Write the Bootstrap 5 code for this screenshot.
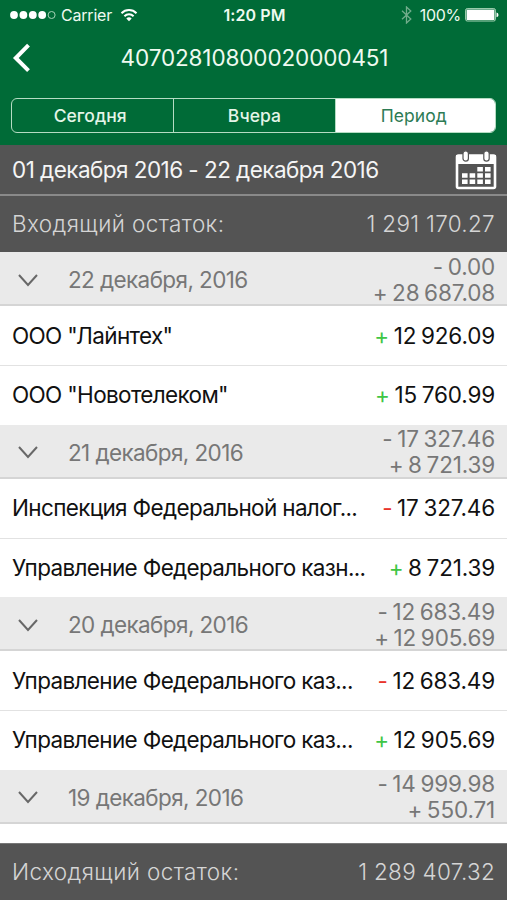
<!DOCTYPE html>
<html lang="ru">
<head>
<meta charset="utf-8">
<meta name="viewport" content="width=device-width, initial-scale=1">
<title>Выписка по счёту</title>
<link rel="stylesheet" href="https://cdn.jsdelivr.net/npm/bootstrap@5.3.0/dist/css/bootstrap.min.css">
<style>
body{font-family:Inter,"Liberation Sans",sans-serif;font-size:22.5px;line-height:26px;color:#111;width:507px;height:900px;overflow:hidden;background:#fff}
svg{display:block;flex:none}
.top-area{background:#006b37;color:#effaf0;height:145px}
.status-bar{height:30px;font-size:16px;line-height:30px;padding:0 8px 0 10px}
.status-bar>div{flex:1 1 0}
.carrier{letter-spacing:-.2px;margin-left:5px}
.clock{font-weight:600;letter-spacing:.1px}
.pct{margin-left:8px;letter-spacing:-.3px}
.title-bar{height:56px;padding:0 12px}
.account{letter-spacing:-.12px;padding-right:18px}
.periods{margin:12px 11px 0;height:35px;border:1.5px solid #b5dcc3;border-radius:6px;overflow:hidden;display:flex}
.periods .btn{flex:none;width:33.4%;padding:0 5px 0 0;border:0;border-radius:0;font-size:17.5px;font-weight:500;line-height:33px;color:#e4f5e8;letter-spacing:.05px}
.periods .btn+.btn{border-left:1.5px solid #b5dcc3;padding-right:0}
.periods .btn.active{background:#fff;color:#2d7b55;font-weight:400;line-height:32px;padding-right:4px}
.range-row{height:51px;background:#545454;color:#f5f5f5;border-bottom:2px solid #8a8a8a;padding:0 10px 0 12px}
.range-text{letter-spacing:-.54px;padding-top:1px}
.balance{background:#545454;color:#d5d5d5;padding:0 12px;font-weight:300}
.balance-in{height:56px}
.balance-out{height:57px;border-top:1px solid #777}
.balance-label{letter-spacing:.4px}
.sum{letter-spacing:-.15px;word-spacing:-1.5px}
.balance .sum{letter-spacing:.3px;word-spacing:0}
.day-head{height:54px;background:#eaeaea;color:#777;border-bottom:2px solid #d5d5d5;padding:3px 12px 0 18px}
.day-name{margin-left:30px;letter-spacing:-.6px;padding-top:1px}
.entry{height:59.25px;padding:0 12px}
.entry+.entry{border-top:1.5px solid #e2e2e2}
.payee{letter-spacing:-.66px}
.plus{color:#3fc646}
.minus{color:#e9342c}
.list-area{height:591px;overflow:hidden}
</style>
<script src="https://cdn.jsdelivr.net/npm/bootstrap@5.3.0/dist/js/bootstrap.bundle.min.js"></script>
</head>
<body>
<header class="top-area">
  <div class="status-bar d-flex align-items-center">
    <div class="d-flex align-items-center">
      <svg width="46" height="12" viewBox="0 0 46 12"><g fill="#fff"><circle cx="4" cy="6" r="3.9"/><circle cx="13.4" cy="6" r="3.9"/><circle cx="22.8" cy="6" r="3.9"/><circle cx="32.2" cy="6" r="3.9"/></g><circle cx="41.6" cy="6" r="3.5" fill="none" stroke="#a5d3b6"/></svg>
      <span class="carrier">Carrier</span>
      <svg class="ms-2" width="18" height="14" viewBox="0 0 18 14" fill="none" stroke="#fff" stroke-width="2"><path d="M1.5 5.2A10.6 10.6 0 0 1 16.5 5.2M4.4 8.2A6.6 6.6 0 0 1 13.6 8.2"/><path d="M9 13.2 6.3 10.5A3.8 3.8 0 0 1 11.7 10.5Z" fill="#fff" stroke="none"/></svg>
    </div>
    <span class="clock">1:20 PM</span>
    <div class="d-flex align-items-center justify-content-end">
      <svg width="11" height="18" viewBox="0 0 11 18" fill="none" stroke="#72ad8c" stroke-width="1.3"><path d="M1 4.7 9.8 13 5.5 17V1L9.8 5 1 13.3"/></svg>
      <span class="pct">100%</span>
      <svg class="ms-1" width="34" height="14" viewBox="0 0 34 14"><rect x=".6" y=".6" width="29.8" height="12.4" rx="1.6" fill="none" stroke="#a8d5b7"/><rect x="1.6" y="1.6" width="27.8" height="10.4" fill="#fff"/><path d="M31.5 4.5q2 .4 2 2.4t-2 2.4z" fill="#fff"/></svg>
    </div>
  </div>
  <div class="title-bar d-flex align-items-center">
    <svg width="20" height="30" viewBox="0 0 20 30" fill="none" stroke="#fff" stroke-width="4"><path d="M16.5 2.2 3.8 15 16.5 27.6"/></svg>
    <div class="flex-grow-1 text-center account">40702810800020000451</div>
  </div>
  <div class="periods" role="group">
    <button type="button" class="btn">Сегодня</button>
    <button type="button" class="btn">Вчера</button>
    <button type="button" class="btn active">Период</button>
  </div>
</header>
<div class="range-row d-flex align-items-center justify-content-between">
  <span class="range-text">01 декабря 2016 - 22 декабря 2016</span>
  <svg width="42" height="40" viewBox="0 0 42 40"><rect x="2" y="5.5" width="38" height="32.5" rx="1.5" fill="none" stroke="#fff" stroke-width="2.6"/><path fill="#fff" d="M1 5h40v9H1z"/><g fill="#fff" stroke="#545454" stroke-width="1.2"><rect x="8" y=".8" width="5.4" height="10.4" rx="2.7"/><rect x="28.8" y=".8" width="5.4" height="10.4" rx="2.7"/></g><path fill="#fff" d="M22.3 17h5.6v4.6h-5.6zM30 17h5.6v4.6H30zM7 23.2h5.6v4.6H7zM14.6 23.2h5.6v4.6h-5.6zM22.3 23.2h5.6v4.6h-5.6zM30 23.2h5.6v4.6H30zM7 29.4h5.6V34H7zM14.6 29.4h5.6V34h-5.6zM22.3 29.4h5.6V34h-5.6zM30 29.4h5.6V34H30z"/></svg>
</div>
<div class="balance balance-in d-flex align-items-center justify-content-between"><span class="balance-label">Входящий остаток:</span><span class="sum">1 291 170.27</span></div>
<main class="list-area">
  <div class="day-head d-flex align-items-center">
    <svg width="20" height="14" viewBox="0 0 20 14" fill="none" stroke="#686868" stroke-width="2"><path d="M1 2 10 12 19 2"/></svg>
    <span class="day-name">22 декабря, 2016</span>
    <div class="sum text-end ms-auto"><div>- 0.00</div><div>+ 28 687.08</div></div>
  </div>
  <div class="entry d-flex align-items-center justify-content-between"><span class="payee">ООО "Лайнтех"</span><span class="sum"><span class="plus">+</span> 12 926.09</span></div>
  <div class="entry d-flex align-items-center justify-content-between"><span class="payee">ООО "Новотелеком"</span><span class="sum"><span class="plus">+</span> 15 760.99</span></div>
  <div class="day-head d-flex align-items-center">
    <svg width="20" height="14" viewBox="0 0 20 14" fill="none" stroke="#686868" stroke-width="2"><path d="M1 2 10 12 19 2"/></svg>
    <span class="day-name">21 декабря, 2016</span>
    <div class="sum text-end ms-auto"><div>- 17 327.46</div><div>+ 8 721.39</div></div>
  </div>
  <div class="entry d-flex align-items-center justify-content-between"><span class="payee">Инспекция Федеральной налог...</span><span class="sum"><span class="minus">-</span> 17 327.46</span></div>
  <div class="entry d-flex align-items-center justify-content-between"><span class="payee">Управление Федерального казн...</span><span class="sum"><span class="plus">+</span> 8 721.39</span></div>
  <div class="day-head d-flex align-items-center">
    <svg width="20" height="14" viewBox="0 0 20 14" fill="none" stroke="#686868" stroke-width="2"><path d="M1 2 10 12 19 2"/></svg>
    <span class="day-name">20 декабря, 2016</span>
    <div class="sum text-end ms-auto"><div>- 12 683.49</div><div>+ 12 905.69</div></div>
  </div>
  <div class="entry d-flex align-items-center justify-content-between"><span class="payee">Управление Федерального каз...</span><span class="sum"><span class="minus">-</span> 12 683.49</span></div>
  <div class="entry d-flex align-items-center justify-content-between"><span class="payee">Управление Федерального каз...</span><span class="sum"><span class="plus">+</span> 12 905.69</span></div>
  <div class="day-head d-flex align-items-center">
    <svg width="20" height="14" viewBox="0 0 20 14" fill="none" stroke="#686868" stroke-width="2"><path d="M1 2 10 12 19 2"/></svg>
    <span class="day-name">19 декабря, 2016</span>
    <div class="sum text-end ms-auto"><div>- 14 999.98</div><div>+ 550.71</div></div>
  </div>
</main>
<footer class="balance balance-out d-flex align-items-center justify-content-between"><span class="balance-label">Исходящий остаток:</span><span class="sum">1 289 407.32</span></footer>
</body>
</html>
